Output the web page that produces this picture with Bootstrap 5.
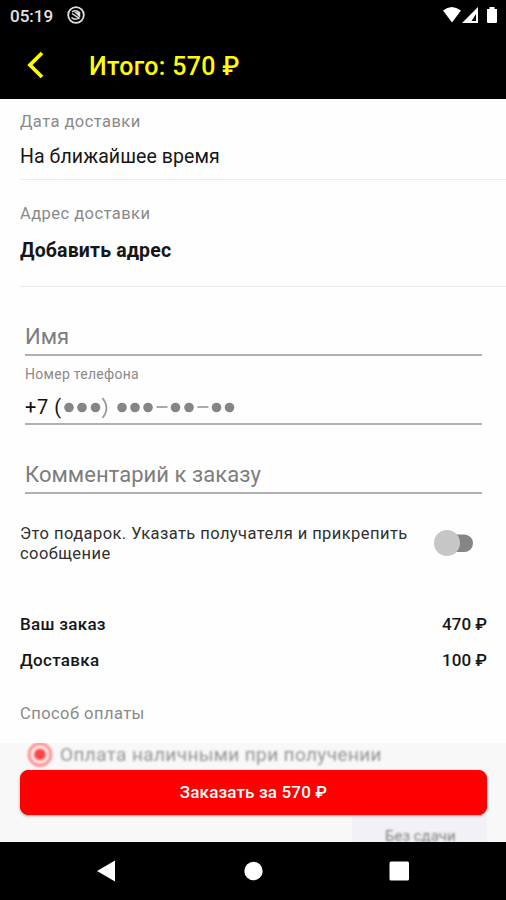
<!DOCTYPE html>
<html lang="ru">
<head>
<meta charset="utf-8">
<meta name="viewport" content="width=device-width, initial-scale=1">
<title>Оформление заказа</title>
<link href="https://cdn.jsdelivr.net/npm/bootstrap@5.3.0/dist/css/bootstrap.min.css" rel="stylesheet">
<style>
body{font-family:Roboto,"Noto Sans",sans-serif;height:900px;overflow:hidden;background:#fefefe;color:#161616}
.screen{width:506px;height:900px}
.status-row{height:30px;padding:0 8px 0 10px;color:#e4e4e4;font-size:17px;font-weight:500;line-height:32px}
.title-row{height:69px;padding-left:27px;color:#ff0}
.title-text{font-size:25px;font-weight:500;line-height:30px;margin:4px 0 0 45px;letter-spacing:.3px}
.content-area{height:644px;padding-left:20px}
.caption-text{font-size:16.500px;line-height:20px;color:#8a8a8a;letter-spacing:.45px}
.value-text{font-size:19.500px;line-height:24px;letter-spacing:.08px}
.date-block{height:81px;padding-top:13px;border-bottom:1px solid #eee}
.date-value{margin-top:13px}
.address-block{height:107px;padding-top:24px;border-bottom:1px solid #eaeaea}
.address-value{margin-top:15px;letter-spacing:.15px}
.entry{margin-left:5px;width:457px;border-bottom:2px solid #b0b0b0;line-height:28px;font-size:22px;color:#7d7d7d}
.name-entry{margin-top:36px;height:33px}
.phone-entry{margin-top:9px;height:60px}
.comment-entry{margin-top:36px;height:33px;letter-spacing:.05px}
.tiny-label{font-size:14px;line-height:18px;color:#8a8a8a;letter-spacing:.28px}
.phone-value{font-size:20px;line-height:26px;color:#111;height:26px;margin-top:11px}
.phone-prefix{width:39px;letter-spacing:.6px}
.gift-row{margin-top:30px}
.gift-text{width:387px;font-size:16.500px;line-height:20px;color:#303030;letter-spacing:.43px;white-space:nowrap}
.gift-switch{margin-left:27px;margin-top:6px}
.sum-row{font-size:17px;font-weight:500;line-height:22px;padding-right:19px}
.sum-name{letter-spacing:.3px}
.first-sum{margin-top:49px}
.second-sum{margin-top:14px}
.pay-caption{margin-top:33px}
.bottom-area{height:99px;background:#f8f8f8}
.soft{filter:blur(1px)}
.pay-row{height:27px;padding-left:27px;margin-top:-1px}
.pay-text{font-size:19px;line-height:24px;color:#949494;margin:1px 0 0 7px;letter-spacing:.38px}
.order-btn{--bs-btn-bg:#fe0000;--bs-btn-color:#fff;--bs-btn-border-color:#fe0000;--bs-btn-hover-bg:#e60000;--bs-btn-hover-color:#fff;width:467px;height:45px;margin:1px 0 0 20px;padding:1px 0 0;border-radius:8px;font-size:17px;font-weight:500;letter-spacing:.15px;box-shadow:0 1px 3px #0005}
.change-box{width:135px;height:28px;margin-left:352px;background:#f2f2f6;color:#808080;font-size:15px;line-height:20px;padding:11px 0 0 33px}
.nav-row{height:58px}
svg{display:block;flex:none}
</style>
<script src="https://cdn.jsdelivr.net/npm/bootstrap@5.3.0/dist/js/bootstrap.bundle.min.js"></script>
</head>
<body>
<div class="screen d-flex flex-column">
  <header class="bg-black">
    <div class="status-row d-flex justify-content-between">
      <div class="d-flex"><span>05:19</span>
        <svg style="margin:6px 0 0 14px" width="18" height="18" viewBox="0 0 18 18" fill="none" stroke="#e0e0e0"><circle cx="9" cy="9" r="7.800" stroke-width="1.800"/><path d="M5 5.800Q9 3.300 12.500 6.500V11M4.500 11.500Q7.500 14.500 12 12.200L5 7.500" stroke-width="1.500"/><path d="M7 6l6 .5v5z" fill="#e0e0e0" stroke="none"/></svg>
      </div>
      <svg width="56" height="30" fill="#fff"><path d="M1 10.500Q9.500 3.500 19 10.500L10 22.500z"/><path d="M36 7v16H20zm-2 7l-4.500 7H34z" fill-rule="evenodd"/><path d="M45 9h2.500V7h5v2H55v13a1 1 0 0 1-1 1h-8a1 1 0 0 1-1-1z"/></svg>
    </div>
    <div class="title-row d-flex align-items-center">
      <svg width="17" height="28" viewBox="0 0 17 28" fill="none" stroke="#ff0" stroke-width="3.800"><path d="M15 2L3 14L15 26"/></svg>
      <span class="title-text">Итого: 570 ₽</span>
    </div>
  </header>
  <main class="content-area">
    <section class="date-block">
      <div class="caption-text">Дата доставки</div>
      <div class="value-text date-value">На ближайшее время</div>
    </section>
    <section class="address-block">
      <div class="caption-text">Адрес доставки</div>
      <div class="value-text address-value fw-bold">Добавить адрес</div>
    </section>
    <div class="entry name-entry">Имя</div>
    <div class="entry phone-entry">
      <div class="tiny-label">Номер телефона</div>
      <div class="phone-value d-flex align-items-center">
        <span class="phone-prefix text-nowrap">+7 (</span>
        <svg width="175" height="26" fill="#858585"><circle cx="5" cy="13.500" r="4.800"/><circle cx="18" cy="13.500" r="4.800"/><circle cx="31.500" cy="13.500" r="4.800"/><path d="M38.500 4Q46.500 14 38.500 24" fill="none" stroke="#999" stroke-width="1.700"/><circle cx="58" cy="13.500" r="4.800"/><circle cx="71" cy="13.500" r="4.800"/><circle cx="84" cy="13.500" r="4.800"/><path d="M92.500 12h11v2h-11zM133.500 12h11v2h-11z" fill="#aaa"/><circle cx="111.500" cy="13.500" r="4.800"/><circle cx="125" cy="13.500" r="4.800"/><circle cx="152.500" cy="13.500" r="4.800"/><circle cx="165.500" cy="13.500" r="4.800"/></svg>
      </div>
    </div>
    <div class="entry comment-entry">Комментарий к заказу</div>
    <div class="gift-row d-flex">
      <div class="gift-text">Это подарок. Указать получателя и прикрепить<br>сообщение</div>
      <svg class="gift-switch" width="40" height="28"><rect x="12" y="4.500" width="27" height="17.500" rx="8.700" fill="#858585"/><circle cx="13" cy="13" r="13" fill="#c6c6c6"/></svg>
    </div>
    <div class="sum-row first-sum d-flex justify-content-between"><span class="sum-name">Ваш заказ</span><span>470 ₽</span></div>
    <div class="sum-row second-sum d-flex justify-content-between"><span class="sum-name">Доставка</span><span>100 ₽</span></div>
    <div class="caption-text pay-caption">Способ оплаты</div>
  </main>
  <section class="bottom-area overflow-hidden">
    <div class="pay-row soft d-flex">
      <svg width="26" height="26" fill="none"><circle cx="13" cy="12.500" r="11" fill="#fde4e4" stroke="#fb9090" stroke-width="2.800"/><circle cx="13" cy="12.500" r="5.800" fill="#fb4848"/></svg>
      <span class="pay-text">Оплата наличными при получении</span>
    </div>
    <button class="btn order-btn d-block position-relative" type="button">Заказать за 570 ₽</button>
    <div class="change-box"><span class="soft d-inline-block">Без сдачи</span></div>
  </section>
  <footer class="nav-row bg-black">
    <svg width="506" height="58" fill="#fff"><path d="M97 29L115 18.500v21z"/><circle cx="253.500" cy="29" r="9.200"/><rect x="389.500" y="19.500" width="19.500" height="19" rx="1.500"/></svg>
  </footer>
</div>
</body>
</html>
